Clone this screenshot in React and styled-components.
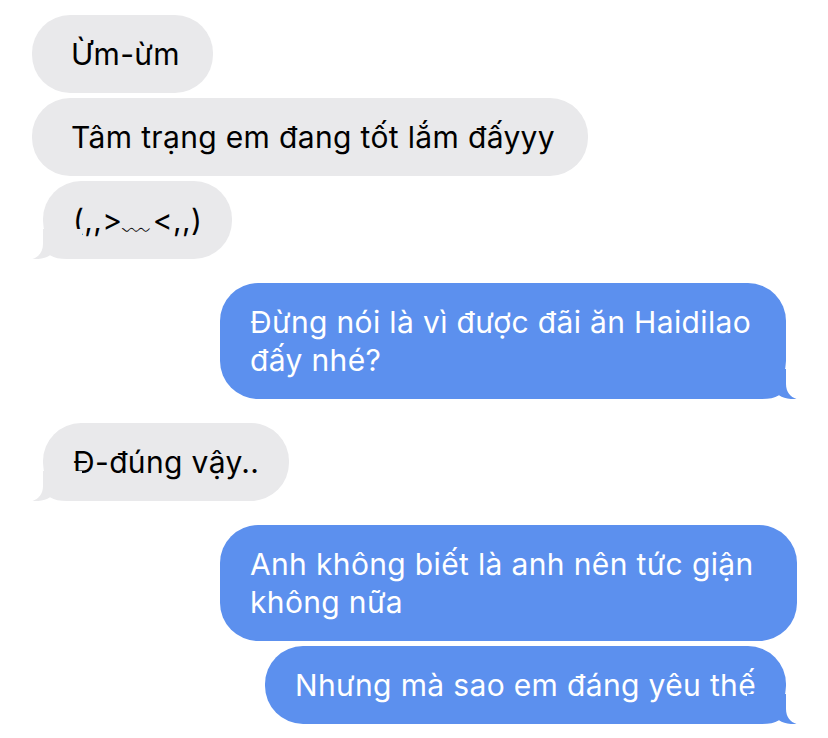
import React from "react";
import styled, { createGlobalStyle, css } from "styled-components";

const Global = createGlobalStyle`
  html, body { margin: 0; padding: 0; background: #ffffff; }
  body { font-family: Inter, "Noto Sans", "DejaVu Sans", sans-serif; }
  * { box-sizing: border-box; }
`;

const Thread = styled.main`
  width: 828px;
  height: 738px;
  overflow: hidden;
  background: #ffffff;
  display: flex;
  flex-direction: column;
  gap: 24px;
  padding-top: 15px;
`;

const Group = styled.section`
  display: flex;
  flex-direction: column;
  gap: 5px;
`;

const Row = styled.div`
  display: flex;
  justify-content: ${(p) => (p.$me ? "flex-end" : "flex-start")};
  padding: ${(p) => (p.$me ? "0 31px 0 0" : "0 0 0 32px")};
`;

const Bubble = styled.div`
  position: relative;
  max-width: 577px;
  border-radius: 38px;
  font-family: Inter, "Noto Sans", sans-serif;
  font-size: 30px;
  line-height: 38px;
  letter-spacing: 0.35px;
  padding: 20px 33px 20px 39px;
  background: ${(p) => (p.$me ? "#5c90ee" : "#e9e9eb")};
  color: ${(p) => (p.$me ? "#ffffff" : "#000000")};
  ${(p) =>
    p.$me &&
    css`
      padding: 20px 38px 20px 30px;
    `}
  ${(p) =>
    p.$tail &&
    css`
      max-width: 566px;
      padding: 20px 30px;
      ${p.$me ? "margin-right: 11px;" : "margin-left: 11px;"}
    `}
`;

const TailSvg = styled.svg`
  position: absolute;
  bottom: 0;
  width: 50px;
  height: 30px;
  ${(p) =>
    p.$me
      ? css`
          right: -11px;
          transform: scaleX(-1);
        `
      : css`
          left: -11px;
        `}
`;

function Tail({ me, color }) {
  return (
    <TailSvg $me={me} viewBox="0 0 50 30" aria-hidden="true">
      <path
        d="M11 0 L11 15 C11 23 6.5 28 0.5 30 C7.5 30.6 13.5 29 18 26.2 C22.5 29 28 30 35 30 L50 30 L50 0 Z"
        fill={color}
      />
    </TailSvg>
  );
}

function Message({ me, tail, children }) {
  return (
    <Row $me={me}>
      <Bubble $me={me} $tail={tail}>
        {children}
        {tail && <Tail me={me} color={me ? "#5c90ee" : "#e9e9eb"} />}
      </Bubble>
    </Row>
  );
}

export default function App() {
  return (
    <>
      <Global />
      <Thread>
        <Group>
          <Message>Ừm-ừm</Message>
          <Message>Tâm trạng em đang tốt lắm đấyyy</Message>
          <Message tail>(,,&gt;﹏&lt;,,)</Message>
        </Group>
        <Group>
          <Message me tail>
            Đừng nói là vì được đãi ăn Haidilao đấy nhé?
          </Message>
        </Group>
        <Group>
          <Message tail>Đ-đúng vậy..</Message>
        </Group>
        <Group>
          <Message me>Anh không biết là anh nên tức giận không nữa</Message>
          <Message me tail>
            Nhưng mà sao em đáng yêu thế
          </Message>
        </Group>
      </Thread>
    </>
  );
}
